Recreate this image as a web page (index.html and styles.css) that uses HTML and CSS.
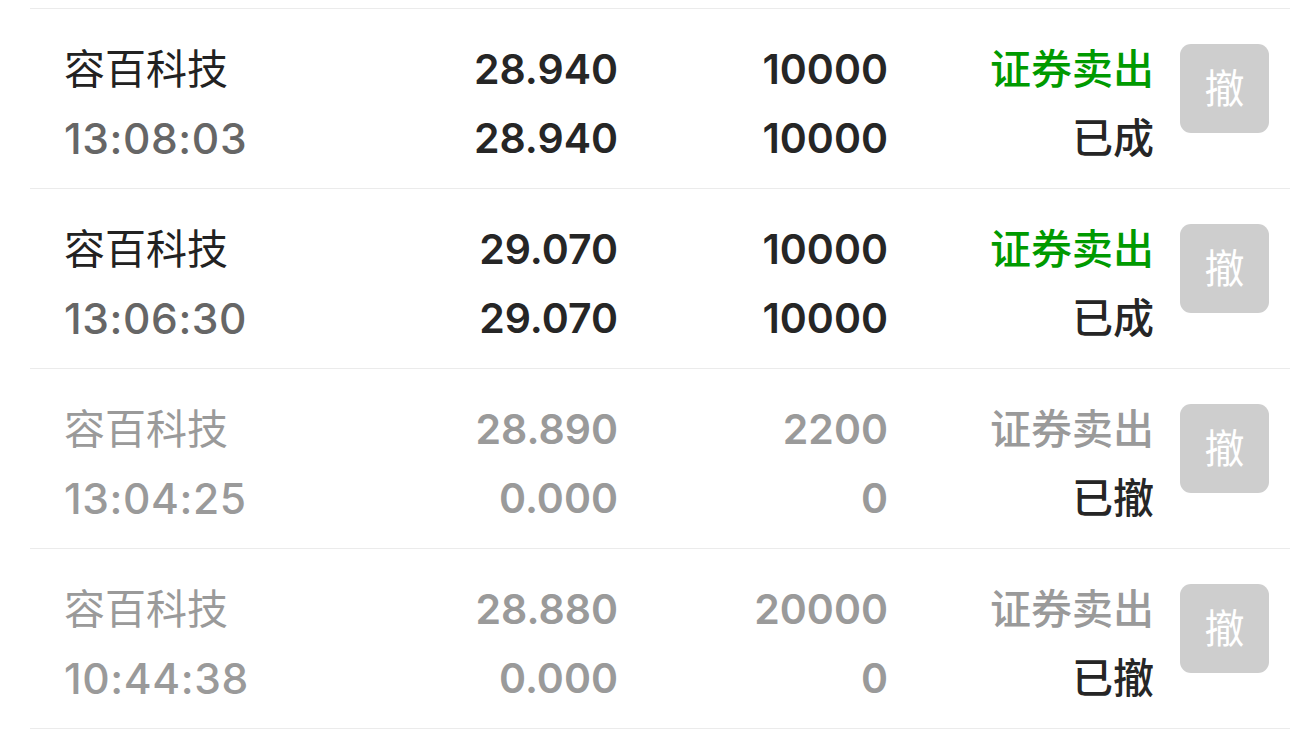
FILE: index.html
```html
<!DOCTYPE html>
<html lang="zh-CN">
<head>
<meta charset="utf-8">
<title>委托列表</title>
<link rel="stylesheet" href="styles.css">
</head>
<body>
<div class="list">
  <div class="row">
    <div class="cell name"><div class="l1 cjk">容百科技</div><div class="l2 time">13:08:03</div></div>
    <div class="cell num"><div class="l1">28.940</div><div class="l2">28.940</div></div>
    <div class="cell num"><div class="l1">10000</div><div class="l2">10000</div></div>
    <div class="cell status"><div class="l1 cjk sell">证券卖出</div><div class="l2 cjk state">已成</div></div>
    <div class="btn">撤</div>
  </div>
  <div class="row">
    <div class="cell name"><div class="l1 cjk">容百科技</div><div class="l2 time">13:06:30</div></div>
    <div class="cell num"><div class="l1">29.070</div><div class="l2">29.070</div></div>
    <div class="cell num"><div class="l1">10000</div><div class="l2">10000</div></div>
    <div class="cell status"><div class="l1 cjk sell">证券卖出</div><div class="l2 cjk state">已成</div></div>
    <div class="btn">撤</div>
  </div>
  <div class="row faded">
    <div class="cell name"><div class="l1 cjk">容百科技</div><div class="l2 time">13:04:25</div></div>
    <div class="cell num"><div class="l1">28.890</div><div class="l2">0.000</div></div>
    <div class="cell num"><div class="l1">2200</div><div class="l2">0</div></div>
    <div class="cell status"><div class="l1 cjk sell">证券卖出</div><div class="l2 cjk state">已撤</div></div>
    <div class="btn">撤</div>
  </div>
  <div class="row faded">
    <div class="cell name"><div class="l1 cjk">容百科技</div><div class="l2 time">10:44:38</div></div>
    <div class="cell num"><div class="l1">28.880</div><div class="l2">0.000</div></div>
    <div class="cell num"><div class="l1">20000</div><div class="l2">0</div></div>
    <div class="cell status"><div class="l1 cjk sell">证券卖出</div><div class="l2 cjk state">已撤</div></div>
    <div class="btn">撤</div>
  </div>
</div>
</body>
</html>
```

FILE: styles.css
```css
* { box-sizing: border-box; }
html, body { margin: 0; padding: 0; background: #ffffff; }
body {
  font-family: "Inter", "Noto Sans CJK SC", sans-serif;
  color: #262626;
  overflow: hidden;
}
.list {
  padding-top: 8px;
}
.list::before {
  content: "";
  display: block;
  margin-left: 30px;
  height: 1px;
  background: #ebebeb;
}
.row {
  margin-left: 30px;
  padding: 26px 0 15px 34px;
  height: 180px;
  border-bottom: 1px solid #ebebeb;
  display: grid;
  grid-template-columns: 338px 216px 270px 266px 89px;
  align-items: start;
}
.cell .l1, .cell .l2 {
  height: 69px;
  line-height: 69px;
  white-space: nowrap;
}
.cell .cjk {
  font-family: "Noto Sans CJK SC", sans-serif;
  line-height: 63px;
}
.name .l1 {
  font-size: 41px;
  font-weight: 400;
  color: #222222;
}
.time {
  font-family: "Inter", sans-serif;
  font-size: 42.5px;
  letter-spacing: 0.6px;
  font-weight: 500;
  color: #666666;
}
.num {
  text-align: right;
  font-size: 41px;
  font-weight: 600;
  color: #262626;
}
.status {
  text-align: right;
  font-size: 41px;
}
.sell { color: #009a00; font-weight: 500; }
.state { color: #262626; font-weight: 500; }
.btn {
  margin-left: 26px;
  margin-top: 9px;
  width: 89px;
  height: 89px;
  padding-bottom: 6px;
  border-radius: 11px;
  background: #cecece;
  color: #ffffff;
  font-family: "Noto Sans CJK SC", sans-serif;
  font-size: 40px;
  display: flex;
  align-items: center;
  justify-content: center;
}
.faded .name .l1,
.faded .time,
.faded .num,
.faded .sell { color: #9a9a9a; }
```
